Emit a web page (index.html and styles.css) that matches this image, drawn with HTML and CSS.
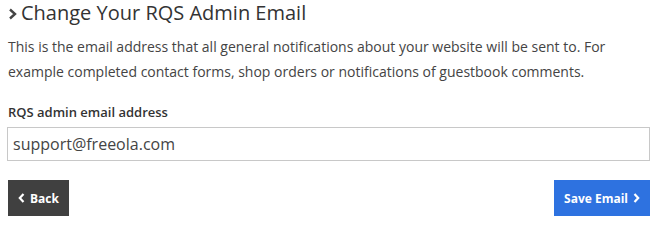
FILE: index.html
```html
<!DOCTYPE html>
<html>
<head>
  <meta charset="UTF-8">
  <title>Change Your RQS Admin Email</title>
  <link rel="stylesheet" href="styles.css">
</head>
<body>
  <div class="panel">
    <h2 class="title">
      <svg class="title-icon" width="9" height="12" viewBox="0 0 9 12"><path d="M2 1.5 L7 6 L2 10.5" fill="none" stroke="#444" stroke-width="2.4"/></svg>
      Change Your RQS Admin Email
    </h2>
    <p class="intro">This is the email address that all general notifications about your website will be sent to. For example completed contact forms, shop orders or notifications of guestbook comments.</p>

    <div class="field">
      <label for="adminEmail">RQS admin email address</label>
      <input type="text" id="adminEmail" value="support@freeola.com">
    </div>

    <div class="actions">
      <button class="btn back">
        <svg width="7" height="10" viewBox="0 0 7 10"><path d="M5.5 1 L1.8 5 L5.5 9" fill="none" stroke="#fff" stroke-width="2.2"/></svg>
        Back
      </button>
      <button class="btn save">
        Save Email
        <svg width="7" height="10" viewBox="0 0 7 10"><path d="M1.5 1 L5.2 5 L1.5 9" fill="none" stroke="#fff" stroke-width="2.2"/></svg>
      </button>
    </div>
  </div>
</body>
</html>
```

FILE: styles.css
```css
body {
  margin: 0;
  padding: 0 11px 0 8px;
  font-family: "Open Sans", Arial, sans-serif;
  color: #444;
  background: #fff;
}
.panel {
  display: flex;
  flex-direction: column;
}
.title {
  display: flex;
  align-items: center;
  gap: 4px;
  margin: 0;
  font-size: 20px;
  font-weight: 400;
  line-height: 26px;
  color: #333;
}
.title-icon {
  margin-top: 2px;
}
.intro {
  margin: 8px 0 0;
  font-size: 14px;
  line-height: 25px;
  color: #444;
}
.field {
  display: flex;
  flex-direction: column;
  gap: 6px;
  margin-top: 19px;
}
.field label {
  font-size: 13px;
  font-weight: 600;
  color: #333;
}
.field input {
  height: 34px;
  box-sizing: border-box;
  margin-left: -1px;
  padding: 0 5px;
  border: 1px solid #c8c8c8;
  font-family: "Open Sans", Arial, sans-serif;
  font-size: 16px;
  color: #444;
  outline: none;
}
.actions {
  display: flex;
  justify-content: space-between;
  margin-top: 19px;
}
.btn {
  display: inline-flex;
  align-items: center;
  gap: 5px;
  height: 36px;
  padding: 0 10px;
  border: none;
  border-radius: 0;
  color: #fff;
  font-family: "Open Sans", Arial, sans-serif;
  font-size: 12px;
  font-weight: 700;
  cursor: pointer;
}
.btn.back {
  background-color: #404040;
}
.btn.save {
  background-color: #2e72e0;
}
```
